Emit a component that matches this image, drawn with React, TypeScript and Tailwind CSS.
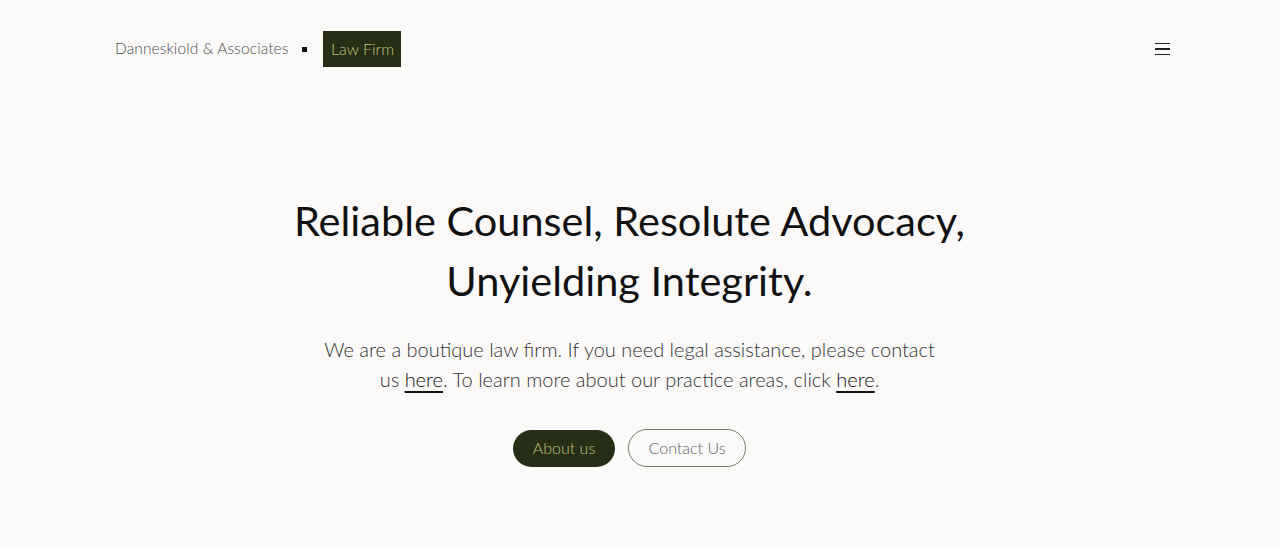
import React from "react";

export default function App() {
  const font = { fontFamily: '"Lato", "Noto Sans", sans-serif' };
  return (
    <div className="min-h-[547px] w-full bg-[#fbfaf9] text-[#111]" style={font}>
      <header className="flex items-center justify-between pl-[115px] pr-[110px] pt-[31px]">
        <div className="flex items-center">
          <span className="text-[15.5px] font-light text-[#4b4f52] tracking-[0.1px]">Danneskiold &amp; Associates</span>
          <span className="ml-[14px] mr-[16px] inline-block h-[5px] w-[5px] bg-[#111]" />
          <span className="flex h-[36px] w-[78px] items-center justify-center bg-[#262f16] text-[16px] font-light text-[#c2c47c]">Law Firm</span>
        </div>
        <button className="flex h-[36px] w-[16px] flex-col items-center justify-center gap-[4px]" aria-label="menu">
          <span className="block h-[1.5px] w-[15px] bg-[#222]" />
          <span className="block h-[1.5px] w-[15px] bg-[#222]" />
          <span className="block h-[1.5px] w-[15px] bg-[#222]" />
        </button>
      </header>
      <main className="flex flex-col items-center pr-[21px] pt-[123px]">
        <h1 className="text-center text-[41.5px] font-normal leading-[60px] text-[#111]">
          Reliable Counsel, Resolute Advocacy,
          <br />
          Unyielding Integrity.
        </h1>
        <p className="mt-[24px] w-[628px] text-center text-[20px] font-light leading-[30px] text-[#333]">
          We are a boutique law firm. If you need legal assistance, please contact us{" "}
          <a className="underline decoration-[1.5px] underline-offset-[4px] text-[#111]">here</a>. To learn more about our practice areas, click{" "}
          <a className="underline decoration-[1.5px] underline-offset-[4px] text-[#111]">here</a>.
        </p>
        <div className="mt-[35px] flex items-center gap-[13px]">
          <button className="h-[37px] w-[102px] rounded-full bg-[#262f16] text-[16px] font-light text-[#c2c47c]">About us</button>
          <button className="h-[38px] w-[118px] rounded-full border border-[#7a7a72] text-[16px] font-light text-[#5a6266]">Contact Us</button>
        </div>
      </main>
    </div>
  );
}
